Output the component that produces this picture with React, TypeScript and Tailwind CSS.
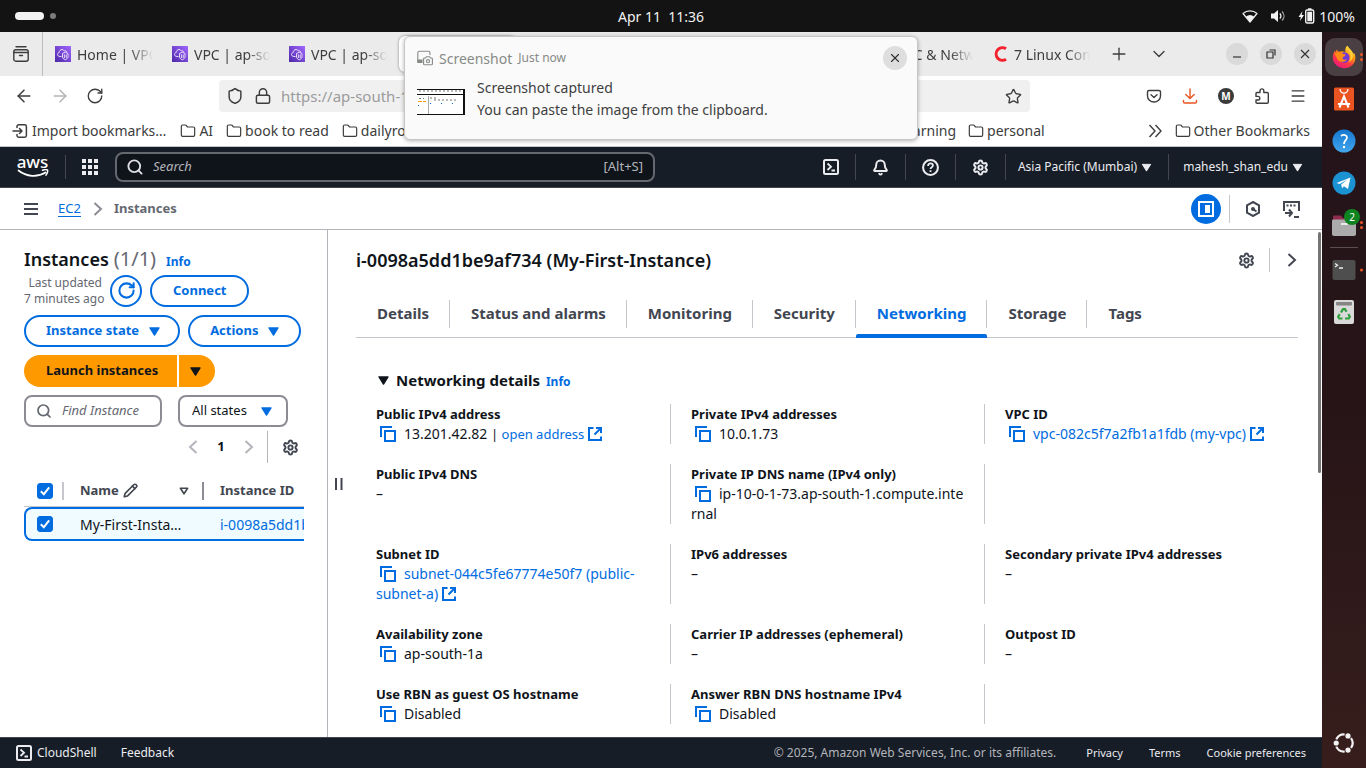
import type { ReactNode } from 'react';
import { Settings, Bell, Search, Shield, Lock, Star, Plus, ChevronDown, X, Menu, Folder, ArrowLeft, ArrowRight, RotateCw, Pencil } from 'lucide-react';

/* ---------- shared glyphs ---------- */

const Caret = ({ className = '' }: { className?: string }) => (
  <svg aria-hidden="true" viewBox="0 0 12 10" className={`h-[9px] w-[11px] shrink-0 ${className}`} fill="currentColor" stroke="currentColor" strokeWidth="1.5" strokeLinejoin="round">
    <path d="M1 1h10L6 9z" />
  </svg>
);

const Chevron = ({ left = false, className = '' }: { left?: boolean; className?: string }) => (
  <svg aria-hidden="true" viewBox="0 0 16 16" className={`size-4 shrink-0 ${className}`} fill="none" stroke="currentColor" strokeWidth="2">
    <path d={left ? 'M11.5 2 5 8l6.5 6' : 'M4.500 2 11 8l-6.500 6'} />
  </svg>
);

const CopyButton = () => (
  <button type="button" aria-label="Copy" className="mr-2 ml-1 inline-block size-4 align-[-3px] text-[#006ce0]">
    <svg aria-hidden="true" viewBox="0 0 16 16" className="size-4" fill="none" stroke="currentColor" strokeWidth="2">
      <path d="M1 11V1h11" />
      <path d="M5 5h10v10H5z" />
    </svg>
  </button>
);

const External = () => (
  <svg aria-hidden="true" viewBox="0 0 14 14" className="ml-1 inline-block size-[14px] align-[-2px]" fill="none" stroke="currentColor" strokeWidth="2">
    <path d="M5.500 1H1v12h12V9.500" />
    <path d="M8 1h5v5M13 1 6.500 7.500" />
  </svg>
);

const ShellIcon = ({ className = '' }: { className?: string }) => (
  <svg aria-hidden="true" viewBox="0 0 16 16" className={className} fill="none" stroke="currentColor" strokeWidth="2">
    <rect x="1" y="1" width="14" height="14" rx="1.500" />
    <path d="m4.500 4.500 3.500 3.200-3.500 3.300M8.500 11.500h3.500" strokeWidth="1.800" />
  </svg>
);

const Link = ({ className = '', children }: { className?: string; children: ReactNode }) => (
  <a href="#" className={`text-[#006ce0] ${className}`}>{children}</a>
);

/* ---------- browser chrome ---------- */

const VpcIcon = () => (
  <svg aria-hidden="true" viewBox="0 0 16 16" className="size-4 shrink-0">
    <defs>
      <linearGradient id="vpc" x1="0" y1="1" x2="1" y2="0">
        <stop offset="0" stopColor="#4d27a8" />
        <stop offset="1" stopColor="#a166ff" />
      </linearGradient>
    </defs>
    <path fill="url(#vpc)" d="M0 0h16v16H0z" />
    <path d="M6.500 10.500H5C3.500 10.500 2.500 9.500 2.500 8.500c0-1 .7-1.800 1.700-1.900C4.200 4.800 5.500 3.500 7 3.500c1 0 1.900.5 2.400 1.400 1-.4 2.300.2 2.400 1.300" fill="none" stroke="#fff" strokeWidth=".8" />
    <path d="M7.500 7.500 10.300 6.200 13 7.500V11c0 1.200-1.300 2.200-2.700 2.800-1.500-.6-2.800-1.600-2.800-2.800zM9.400 8.500v3.500M11.200 8.500v3.500" fill="none" stroke="#fff" strokeWidth=".8" />
  </svg>
);

const BrowserTab = ({ icon, title, active = false }: { icon: ReactNode; title?: string; active?: boolean }) => (
  <div className={`flex h-9 w-[117px] shrink-0 items-center gap-[6px] pl-3 ${active ? 'rounded-md bg-white shadow-[0_0_3px_rgba(0,0,0,0.45)]' : ''}`}>
    {icon}
    {title && <span className="w-[76px] overflow-hidden whitespace-nowrap [mask-image:linear-gradient(to_right,#000_70%,transparent)]">{title}</span>}
  </div>
);

const WinButton = ({ label, children }: { label: string; children: ReactNode }) => (
  <button type="button" aria-label={label} className="grid size-[22px] place-items-center rounded-full bg-[#dadada]">
    <svg aria-hidden="true" viewBox="0 0 12 12" className="size-3" fill="none" stroke="#333" strokeWidth="1.200">{children}</svg>
  </button>
);

const Bookmark = ({ children }: { children: ReactNode }) => (
  <a href="#" className="flex items-center gap-[3px] whitespace-nowrap">
    <Folder aria-hidden="true" className="size-4" strokeWidth={1.8} />
    {children}
  </a>
);

const Browser = () => (
  <div className="shrink-0 text-[14px] text-[#3d3d3d]">
    <div className="flex h-11 items-center overflow-hidden bg-[#ebebeb]">
      <button type="button" aria-label="View open tabs" className="grid h-full w-[42px] shrink-0 place-items-center">
        <svg aria-hidden="true" viewBox="0 0 16 16" className="size-4" fill="none" stroke="currentColor" strokeWidth="1.400" strokeLinecap="round">
          <path d="M3 .8h10" />
          <rect x=".8" y="3.800" width="14.400" height="11.400" rx="2" />
          <path d="M.8 6.500h14.400M6.500 9.500h3" />
        </svg>
      </button>
      <div className="flex h-full min-w-0 flex-1 items-center border-l border-[#bdbdbd]">
        <BrowserTab icon={<VpcIcon />} title="Home | VPC" />
        <BrowserTab icon={<VpcIcon />} title="VPC | ap-so" />
        <BrowserTab icon={<VpcIcon />} title="VPC | ap-so" />
        <div className="ml-[5px]"><BrowserTab active icon={<VpcIcon />} /></div>
        <div className="flex-1" />
        <BrowserTab icon={<VpcIcon />} title="VPC & Netw" />
        <BrowserTab
          icon={<svg aria-hidden="true" viewBox="0 0 16 16" className="size-4 shrink-0" fill="none" stroke="#f5222d" strokeWidth="3"><path d="M14 2.800A6.300 6.300 0 1 0 14 13.200" /></svg>}
          title="7 Linux Con"
        />
        <div className="flex items-center gap-5 pr-[65px] pl-3">
          <button type="button" aria-label="New tab"><Plus className="size-5" strokeWidth={1.6} /></button>
          <button type="button" aria-label="List all tabs"><ChevronDown className="size-5" strokeWidth={1.6} /></button>
        </div>
        <div className="-ml-2 flex shrink-0 items-center gap-3 pr-[6px]">
          <WinButton label="Minimize"><path d="M2 9h8" /></WinButton>
          <WinButton label="Restore"><path d="M2 4h6v6H2zM4.500 2H10v5.500" /></WinButton>
          <WinButton label="Close"><path d="m2 2 8 8M10 2l-8 8" /></WinButton>
        </div>
      </div>
    </div>
    <div className="flex h-10 items-center bg-white pr-4 pl-[14px]">
      <div className="flex w-[205px] shrink-0 items-center gap-4">
        <button type="button" aria-label="Back"><ArrowLeft className="size-5" strokeWidth={1.8} /></button>
        <button type="button" aria-label="Forward" className="text-[#b5b5b5]"><ArrowRight className="size-5" strokeWidth={1.8} /></button>
        <button type="button" aria-label="Reload"><RotateCw className="size-[18px]" strokeWidth={1.8} /></button>
      </div>
      <div className="flex h-8 flex-1 items-center gap-2 rounded bg-[#f0f0f0] px-2">
        <Shield aria-hidden="true" className="size-4 scale-110" strokeWidth={2} />
        <Lock aria-hidden="true" className="ml-1 size-4 scale-110" strokeWidth={2} />
        <input aria-label="Address" readOnly defaultValue="https://ap-south-1" className="ml-[2px] min-w-0 flex-1 bg-transparent text-[15px] text-[#9b9b9b] outline-none" />
        <button type="button" aria-label="Bookmark this page"><Star className="size-[17px]" strokeWidth={1.9} /></button>
      </div>
      <div className="ml-4 flex items-center gap-5 pl-[100px]">
        <button type="button" aria-label="Save to Pocket">
          <svg aria-hidden="true" viewBox="0 0 16 16" className="size-4" fill="none" stroke="currentColor" strokeWidth="1.400" strokeLinecap="round" strokeLinejoin="round">
            <path d="M3 2.500h10c.8 0 1.500.6 1.500 1.500v4a6.500 6 0 0 1-13 0V4c0-.9.700-1.500 1.500-1.500z" />
            <path d="m5 6.800 3 2.700 3-2.700" />
          </svg>
        </button>
        <button type="button" aria-label="Downloads" className="text-[#e95420]">
          <svg aria-hidden="true" viewBox="0 0 16 16" className="size-4" fill="none" stroke="currentColor" strokeWidth="1.400" strokeLinecap="round" strokeLinejoin="round">
            <path d="M8 1v9.500M3.800 6.500 8 10.500l4.200-4M1.500 12.500v1.200c0 .7.600 1.300 1.300 1.300h10.400c.7 0 1.300-.6 1.300-1.300v-1.200" />
          </svg>
        </button>
        <button type="button" aria-label="Account" className="grid size-4 place-items-center rounded-full bg-[#3a3a3a] text-[10px] leading-none font-bold text-white">M</button>
        <button type="button" aria-label="Extensions">
          <svg aria-hidden="true" viewBox="0 0 16 16" className="size-4" fill="none" stroke="currentColor" strokeWidth="1.400" strokeLinejoin="round">
            <path d="M6 4.500V2.800a1.900 1.900 0 0 1 3.800 0v1.700h3.400c.7 0 1.100.4 1.100 1.100v8.600c0 .7-.4 1.100-1.100 1.100H3.100c-.7 0-1.100-.4-1.100-1.100V12h2a1.800 1.800 0 0 0 0-3.600H2V5.600c0-.7.4-1.100 1.100-1.100z" />
          </svg>
        </button>
        <button type="button" aria-label="Menu"><Menu className="size-4 scale-110" strokeWidth={1.8} /></button>
      </div>
    </div>
    <div className="flex h-[31px] items-center border-b border-[#c4c8ca] bg-white pr-3 pb-[1px] pl-3">
      <div className="flex items-center gap-[13px]">
        <a href="#" className="mr-[1px] flex items-center gap-1 whitespace-nowrap">
          <svg aria-hidden="true" viewBox="0 0 16 16" className="size-4" fill="none" stroke="currentColor" strokeWidth="1.500" strokeLinecap="round" strokeLinejoin="round">
            <path d="M5 4.500V3.500c0-1 .7-1.700 1.700-1.700h6c1 0 1.700.7 1.700 1.700v9c0 1-.7 1.700-1.700 1.700h-6c-1 0-1.700-.7-1.700-1.700v-1M1 8h9M7.500 5.500 10 8l-2.500 2.500" />
          </svg>
          Import bookmarks…
        </a>
        <Bookmark>AI</Bookmark>
        <Bookmark>book to read</Bookmark>
        <Bookmark>dailyro</Bookmark>
      </div>
      <div className="ml-auto flex items-center gap-3">
        <Bookmark>learning</Bookmark>
        <Bookmark>personal</Bookmark>
      </div>
      <button type="button" aria-label="More bookmarks" className="mr-3 ml-[102px]">
        <svg aria-hidden="true" viewBox="0 0 16 16" className="size-4" fill="none" stroke="currentColor" strokeWidth="1.400"><path d="m2.500 2 5.500 6-5.500 6M8.500 2 14 8l-5.500 6" /></svg>
      </button>
      <Bookmark>Other Bookmarks</Bookmark>
    </div>
  </div>
);

const Notification = () => (
  <section aria-label="Notification" className="absolute top-1 left-1/2 z-10 h-[104px] w-[514px] -translate-x-1/2 rounded-md border border-[#c6c6c6] bg-[#fafafa] pr-[10px] pl-3 text-[14px] text-[#3f3f3f] shadow-[0_1px_4px_rgba(0,0,0,0.3)]">
    <div className="flex h-10 items-center pt-[2px] text-[#868a86]">
      <svg aria-hidden="true" viewBox="0 0 16 16" className="mr-[6px] size-4" fill="none" stroke="currentColor" strokeWidth="1.100">
        <path d="M5 12.500H2C1.200 12.500.8 12 .8 11.500V3c0-1 .5-1.700 1.500-1.700h9c1 0 1.700.7 1.700 1.700v2" />
        <path d="M1 10h4v2.500H1z" fill="currentColor" />
        <path d="M7.500 8h1l1-1.300h3L13.500 8h1c.5 0 .9.400.9.900v5c0 .5-.4.900-.9.900h-7c-.5 0-.9-.4-.9-.9v-5c0-.5.400-.9.900-.9z" />
        <circle cx="11" cy="11.200" r="1.600" />
      </svg>
      <span>Screenshot</span>
      <span className="ml-[6px] text-[12px]">Just now</span>
      <button type="button" aria-label="Close notification" className="ml-auto grid size-6 place-items-center rounded-full bg-[#dedede] text-[#333]"><X className="size-[14px]" strokeWidth={2} /></button>
    </div>
    <div className="flex items-start gap-3">
      <svg aria-hidden="true" viewBox="0 0 48 26" className="mt-3 h-[26px] w-12 shrink-0">
        <path fill="#fff" d="M0 0h48v26H0z" />
        <path fill="#111" d="M0 0h48v1H0zM0 5h48v1H0zM0 25h48v1H0zM46 0h2v26h-2z" />
        <path stroke="#777" strokeDasharray="2 2" d="M2 2h43M2 9.500h5M13 9h8M17 11h24" />
        <path stroke="#aaa" d="M11.500 7v18" />
        <path stroke="#f90" strokeDasharray="4 1" d="M1 12.500h8" />
        <path stroke="#006ce0" strokeDasharray="1 10" d="M13 14.500h25M1 16.500h3" />
      </svg>
      <div className="leading-[22px]">
        <p>Screenshot captured</p>
        <p>You can paste the image from the clipboard.</p>
      </div>
    </div>
  </section>
);

/* ---------- AWS console ---------- */

const Divider = ({ className = '' }: { className?: string }) => <span className={`w-px shrink-0 ${className}`} />;

const ConsoleHeader = () => (
  <header className="flex h-[41px] shrink-0 items-center border-b border-[#424650] bg-[#161d26] pr-[19px] pl-4 text-[12px] text-[#ebebf0]">
    <a href="#" aria-label="AWS home" className="flex w-[33px] flex-col items-center">
      <span className="h-[13px] text-[17px] leading-[11px] font-medium text-white">aws</span>
      <svg aria-hidden="true" viewBox="0 0 32 9" className="h-[9px] w-8" fill="none" stroke="#fff" strokeWidth="1.700" strokeLinecap="round">
        <path d="M1.500 1.500c8 6.500 19 7 27 2" />
        <path d="M25.500 1.200c2-.6 4.500-.6 5-.1s0 3-1.500 5" strokeWidth="1.500" />
      </svg>
    </a>
    <Divider className="mr-4 ml-4 h-6 bg-[#424650]" />
    <button type="button" aria-label="Services">
      <svg aria-hidden="true" viewBox="0 0 16 16" className="size-4" fill="currentColor">
        <path d="M0 0h4v4H0zM6 0h4v4H6zM12 0h4v4h-4zM0 6h4v4H0zM6 6h4v4H6zM12 6h4v4h-4zM0 12h4v4H0zM6 12h4v4H6zM12 12h4v4h-4z" />
      </svg>
    </button>
    <label className="mr-4 ml-[17px] flex h-[30px] max-w-[540px] flex-1 items-center gap-[10px] rounded-lg border-2 border-[#656871] bg-[#0f141a] px-[10px] text-[#b4b4bb]">
      <Search aria-hidden="true" className="size-4 scale-110 text-[#dedee3]" strokeWidth={2.6} />
      <input aria-label="Search" placeholder="Search" className="min-w-0 flex-1 bg-transparent text-[13px] italic outline-none placeholder:text-[#b4b4bb]" />
      <span className="text-[13px]">[Alt+S]</span>
    </label>
    <div className="ml-auto flex items-center">
      <button type="button" aria-label="CloudShell"><ShellIcon className="size-4" /></button>
      <Divider className="mx-4 h-[26px] bg-[#424650]" />
      <button type="button" aria-label="Notifications"><Bell className="size-[17px]" strokeWidth={2.8} /></button>
      <Divider className="mx-4 h-[26px] bg-[#424650]" />
      <button type="button" aria-label="Help">
        <svg aria-hidden="true" viewBox="0 0 16 16" className="size-[17px]" fill="none" stroke="currentColor" strokeWidth="1.900">
          <circle cx="8" cy="8" r="7" />
          <path d="M5.700 6.500C5.700 5 6.700 4.200 8 4.200s2.300.8 2.300 2c0 1.600-2.300 1.500-2.300 3.100M8 10.600v1.700" strokeWidth="1.700" />
        </svg>
      </button>
      <Divider className="mx-4 h-[26px] bg-[#424650]" />
      <button type="button" aria-label="Settings"><Settings className="size-[17px]" strokeWidth={2.8} /></button>
      <Divider className="mr-3 ml-4 h-[26px] bg-[#424650]" />
      <button type="button" className="flex items-center gap-1 whitespace-nowrap">Asia Pacific (Mumbai) <Caret className="scale-90" /></button>
      <Divider className="mr-[14px] ml-4 h-[26px] bg-[#424650]" />
      <button type="button" className="flex items-center gap-1 whitespace-nowrap">mahesh_shan_edu <Caret className="scale-90" /></button>
    </div>
  </header>
);

const Breadcrumbs = () => (
  <nav aria-label="Breadcrumbs" className="flex h-[42px] shrink-0 items-center border-b border-[#b4b4bb] bg-white pr-[22px] pl-6 text-[13px] text-[#424650]">
    <button type="button" aria-label="Open navigation" className="mr-5">
      <svg aria-hidden="true" viewBox="0 0 14 12" className="h-3 w-[14px]" stroke="currentColor" strokeWidth="2"><path d="M0 1h14M0 6h14M0 11h14" /></svg>
    </button>
    <a href="#" className="border-b border-[#006ce0] leading-4 text-[#006ce0]">EC2</a>
    <Chevron className="mr-2 ml-[9px] text-[#8c8c94]" />
    <span className="font-bold text-[#656871]">Instances</span>
    <div className="ml-auto flex items-center">
      <button type="button" aria-label="Split panel" className="grid size-[30px] place-items-center rounded-full bg-[#006ce0] text-white">
        <svg aria-hidden="true" viewBox="0 0 16 16" className="size-4" fill="none" stroke="currentColor" strokeWidth="2"><path d="M1 1h14v14H1z" /><path d="M7 4h5v8H7z" fill="currentColor" stroke="none" /></svg>
      </button>
      <Divider className="mr-[15px] ml-2 h-7 bg-[#c6c6cd]" />
      <button type="button" aria-label="Resource usage">
        <svg aria-hidden="true" viewBox="0 0 16 16" className="size-4" fill="none" stroke="currentColor" strokeWidth="2"><path d="M8 1 14 4.300v7.400L8 15l-6-3.300V4.300z" /><path d="m8 8 3.500 2.500" /><circle cx="8" cy="8" r="1" fill="currentColor" /></svg>
      </button>
      <button type="button" aria-label="Open shell" className="ml-[21px]">
        <svg aria-hidden="true" viewBox="0 0 18 18" className="size-[18px]" fill="none" stroke="currentColor" strokeWidth="2"><path d="M2 11V2h15v9" /><path d="M4.500 5.500h10" strokeDasharray="2 1.500" /><path d="M3 13h6M7 9.500l3 3.500-3 3.500M12 17h5" /></svg>
      </button>
    </div>
  </nav>
);

const pill = 'flex h-8 items-center rounded-full border-2 border-[#006ce0] text-[13px] font-bold text-[#006ce0]';

const Tick = ({ label }: { label: string }) => (
  <span className="relative block size-4">
    <input type="checkbox" defaultChecked aria-label={label} className="block size-4 appearance-none rounded-[3px] border border-[#8c8c94] checked:border-[#006ce0] checked:bg-[#006ce0]" />
    <svg aria-hidden="true" viewBox="0 0 16 16" className="pointer-events-none absolute inset-0 size-4" fill="none" stroke="#fff" strokeWidth="2"><path d="m3.800 8.300 3 2.900 5.400-6.900" /></svg>
  </span>
);

const InstanceList = () => (
  <aside className="w-[328px] shrink-0 overflow-hidden border-r border-[#b4b4bb] bg-white pr-[23px] pl-6 text-[#424650]">
    <h1 className="mt-[15px] mb-[1px] flex h-7 items-baseline text-[18px] leading-7 font-semibold text-[#0f141a]">
      <span>Instances</span>
      <span className="ml-[5px] text-[20px] font-normal text-[#656871]">(1/1)</span>
      <a href="#" className="ml-[10px] text-[12px] font-bold text-[#006ce0]">Info</a>
    </h1>
    <div className="flex flex-wrap gap-2">
      <div className="flex w-full items-center gap-2">
        <p className="w-[78px] pt-[1px] text-right text-[12px] leading-4 whitespace-nowrap text-[#656871]">Last updated<br />7 minutes ago</p>
        <button type="button" aria-label="Refresh" className={`${pill} w-8 justify-center`}><RotateCw className="size-[19px]" strokeWidth={2.6} /></button>
        <button type="button" className={`${pill} px-[21px]`}>Connect</button>
      </div>
      <button type="button" className={`${pill} gap-[10px] pr-[18px] pl-5`}>Instance state <Caret /></button>
      <button type="button" className={`${pill} gap-[10px] px-5`}>Actions <Caret /></button>
      <div className="flex w-full gap-[2px]">
        <button type="button" className="h-8 rounded-l-full bg-[#ff9900] pr-[19px] pl-[22px] text-[13px] font-bold text-[#0f141a]">Launch instances</button>
        <button type="button" aria-label="More launch options" className="grid h-8 w-9 place-items-center rounded-r-full bg-[#ff9900] pr-1 text-[#0f141a]"><Caret /></button>
      </div>
      <div className="flex w-full gap-4">
        <label className="flex h-8 w-[138px] items-center gap-[10px] rounded-lg border-2 border-[#8c8c94] pr-3 pl-[10px]">
          <Search aria-hidden="true" className="size-4 shrink-0 text-[#656871]" strokeWidth={2.6} />
          <input aria-label="Find Instance" placeholder="Find Instance" className="w-full min-w-0 text-[13px] italic outline-none placeholder:text-[#656871]" />
        </label>
        <div className="flex h-8 w-[110px] items-center rounded-lg border-2 border-[#8c8c94] pr-[14px] pl-3 text-[#0f141a]">
          <select aria-label="State filter" className="min-w-0 flex-1 appearance-none bg-transparent text-[13px] outline-none"><option>All states</option></select>
          <Caret className="text-[#006ce0]" />
        </div>
      </div>
    </div>
    <div className="mt-1 flex h-8 items-center justify-end pr-[5px]">
      <button type="button" aria-label="Previous page" className="text-[#b4b4bb]"><Chevron left /></button>
      <button type="button" className="w-10 text-[13px] font-bold text-[#0f141a]">1</button>
      <button type="button" aria-label="Next page" className="text-[#b4b4bb]"><Chevron /></button>
      <Divider className="mr-[14px] ml-[10px] h-full bg-[#b4b4bb]" />
      <button type="button" aria-label="Table preferences"><Settings className="size-[17px]" strokeWidth={2.7} /></button>
    </div>
    <div className="mt-3 overflow-hidden">
      <table className="w-[420px] table-fixed border-separate border-spacing-0 text-left">
        <thead>
          <tr className="h-8 text-[13px]">
            <th className="w-10 border-b border-[#c6c6cd] p-0"><span className="flex h-[18px] w-full items-center border-r-2 border-[#c6c6cd] pl-[13px]"><Tick label="Select all" /></span></th>
            <th className="w-[140px] border-b border-[#c6c6cd] p-0">
              <span className="flex h-[18px] w-full items-center gap-1 border-r-2 border-[#8c8c94] pr-[13px] pl-4">Name <Pencil aria-hidden="true" className="size-[15px]" strokeWidth={2.6} />
                <svg aria-hidden="true" viewBox="0 0 12 10" className="ml-auto h-2 w-[10px]" fill="none" stroke="currentColor" strokeWidth="2" strokeLinejoin="round"><path d="M1.500 1.500h9L6 8.500z" /></svg>
              </span>
            </th>
            <th className="border-b border-[#c6c6cd] p-0 pl-4">Instance ID</th>
          </tr>
        </thead>
        <tbody>
          <tr className="h-[34px] bg-[#f0fbff] text-[14px] text-[#0f141a]">
            <td className="rounded-l-lg border-2 border-r-0 border-[#006ce0] p-0 pl-[11px]"><Tick label="Select My-First-Instance" /></td>
            <td className="border-y-2 border-[#006ce0] p-0 pl-4"><span className="block w-[104px] truncate">My-First-Instance</span></td>
            <td className="border-y-2 border-[#006ce0] p-0 pl-4"><Link>i-0098a5dd1be9af734</Link></td>
          </tr>
        </tbody>
      </table>
    </div>
  </aside>
);

const TABS = ['Details', 'Status and alarms', 'Monitoring', 'Security', 'Networking', 'Storage', 'Tags'];

const FIELDS: { label?: string; value?: ReactNode; breakAll?: boolean }[] = [
  { label: 'Public IPv4 address', value: <><CopyButton />13.201.42.82 <span className="text-[13px]">| <Link>open address<External /></Link></span></> },
  { label: 'Private IPv4 addresses', value: <><CopyButton />10.0.1.73</> },
  { label: 'VPC ID', value: <><CopyButton /><Link>vpc-082c5f7a2fb1a1fdb (my-vpc)<External /></Link></> },
  { label: 'Public IPv4 DNS', value: '–' },
  { label: 'Private IP DNS name (IPv4 only)', value: <><CopyButton />ip-10-0-1-73.ap-south-1.compute.internal</>, breakAll: true },
  {},
  { label: 'Subnet ID', value: <><CopyButton /><Link>subnet-044c5fe67774e50f7 (public-subnet-a)<External /></Link></> },
  { label: 'IPv6 addresses', value: '–' },
  { label: 'Secondary private IPv4 addresses', value: '–' },
  { label: 'Availability zone', value: <><CopyButton />ap-south-1a</> },
  { label: 'Carrier IP addresses (ephemeral)', value: '–' },
  { label: 'Outpost ID', value: '–' },
  { label: 'Use RBN as guest OS hostname', value: <><CopyButton />Disabled</> },
  { label: 'Answer RBN DNS hostname IPv4', value: <><CopyButton />Disabled</> },
  {},
];

const DetailPanel = () => (
  <main className="flex min-w-0 flex-1 bg-white text-[#0f141a]">
    <button type="button" aria-label="Resize panel" className="flex w-[22px] shrink-0 items-center justify-center">
      <svg aria-hidden="true" viewBox="0 0 8 12" className="h-3 w-2" stroke="#424650" strokeWidth="2"><path d="M1 0v12M6.500 0v12" /></svg>
    </button>
    <div className="min-w-0 flex-1 overflow-hidden pr-5 pl-[6px]">
      <div className="flex h-[60px] items-center">
        <h2 className="text-[18px] font-semibold">i-0098a5dd1be9af734 (My-First-Instance)</h2>
        <div className="-mr-0.5 ml-auto flex items-center text-[#424650]">
          <button type="button" aria-label="Panel preferences"><Settings className="size-[17px]" strokeWidth={2.7} /></button>
          <Divider className="mx-[14px] h-6 bg-[#c6c6cd]" />
          <button type="button" aria-label="Close panel"><Chevron /></button>
        </div>
      </div>
      <div role="tablist" className="flex h-12 border-b border-[#c6c6cd] text-[15px] font-bold text-[#424650]">
        {TABS.map((tab, i) => {
          const active = tab === 'Networking';
          return (
            <button key={tab} type="button" role="tab" aria-selected={active} className={`relative flex items-center whitespace-nowrap ${active ? 'text-[#006ce0]' : ''}`}>
              <span className={`flex h-7 items-center pr-5 pl-[21px] ${i < TABS.length - 1 ? 'border-r border-[#c6c6cd]' : ''}`}>{tab}</span>
              {active && <span className="absolute right-0 -bottom-px left-0 h-1 rounded-t-xs bg-[#006ce0]" />}
            </button>
          );
        })}
      </div>
      <h3 className="mt-[30px] flex h-6 items-center pl-[22px] text-[15px] font-bold">
        <Caret className="mr-[7px]" />
        Networking details
        <a href="#" className="ml-[6px] pt-1 text-[12px] text-[#006ce0]">Info</a>
      </h3>
      <div className="mt-3 grid grid-cols-3 gap-y-5 pb-5 text-[14px] leading-5">
        {FIELDS.map((field, i) => (
          <div key={i} className={`px-5 ${i % 3 ? 'border-l border-[#c6c6cd]' : ''}`}>
            {field.label && <h4 className="text-[13px] leading-5 font-bold">{field.label}</h4>}
            <div className={field.breakAll ? 'break-all' : 'break-words'}>{field.value}</div>
          </div>
        ))}
      </div>
    </div>
    <div className="w-1 shrink-0 pt-[2px]"><div className="h-[241px] w-[3px] rounded-full bg-[#757575]" /></div>
  </main>
);

const Footer = () => (
  <footer className="flex h-[31px] shrink-0 items-center border-t border-[#424650] bg-[#161d26] px-4 text-[12px] whitespace-nowrap text-[#ebebf0]">
    <button type="button" className="flex items-center gap-[5px]"><ShellIcon className="size-4" />CloudShell</button>
    <button type="button" className="ml-6">Feedback</button>
    <span className="ml-auto text-[#b4b4bb]">© 2025, Amazon Web Services, Inc. or its affiliates.</span>
    <div className="ml-[30px] flex gap-[26px] text-[11px]">
      <a href="#">Privacy</a>
      <a href="#">Terms</a>
      <a href="#">Cookie preferences</a>
    </div>
  </footer>
);

/* ---------- desktop ---------- */

const TopBar = () => (
  <div className="flex h-8 shrink-0 items-center bg-[#131313] pr-[11px] pl-[15px] text-[14px] text-[#f2f2f2]">
    <div className="flex flex-1 items-center gap-[6px]">
      <span className="h-2 w-[29px] rounded-full bg-[#f2f2f2]" />
      <span className="size-[6px] rounded-full bg-[#7d7d7d]" />
    </div>
    <time className="mr-12 whitespace-pre">Apr 11  11:36</time>
    <div className="flex flex-1 items-center justify-end">
      <svg aria-hidden="true" viewBox="0 0 16 16" className="size-4"><path d="M1 5.500C5 2 11 2 15 5.500L8 14z" fill="none" stroke="#f2f2f2" strokeWidth="1.200" strokeLinejoin="round" /><path d="M4 8.500c2.500-2 5.500-2 8 0L8 14z" fill="#f2f2f2" /></svg>
      <svg aria-hidden="true" viewBox="0 0 16 16" className="ml-3 size-4"><path d="M1 5.500h3L8 2v12l-4-3.500H1z" fill="#f2f2f2" /><path d="M9.800 5.500c1.500 1.500 1.500 3.500 0 5" fill="none" stroke="#f2f2f2" strokeWidth="1.400" /><path d="M12 3.500c2.700 2.700 2.700 6.300 0 9" fill="none" stroke="#a5a5a5" strokeWidth="1.200" /></svg>
      <svg aria-hidden="true" viewBox="0 0 17 16" className="mr-1 ml-3 h-4 w-[17px]" fill="#f2f2f2"><path d="M4.500 3 .5 9h2.300L2 13l4-6H3.700z" /><rect x="7.700" y="2" width="8" height="13" rx="1.500" fill="none" stroke="#f2f2f2" strokeWidth="1.400" /><path d="M10 .3h3.500V2H10zM9.300 3.700h4.800v9.600H9.300z" /></svg>
      <span>100%</span>
    </div>
  </div>
);

const DockItem = ({ label, dots = 0, active = false, badge, children }: { label: string; dots?: number; active?: boolean; badge?: string; children: ReactNode }) => (
  <button type="button" aria-label={label} className="relative grid h-[42px] w-full place-items-center">
    <span className={`grid size-[38px] place-items-center rounded-[10px] ${active ? 'bg-[#4a3f43]' : ''}`}>
      <svg aria-hidden="true" viewBox="0 0 24 24" className="size-6">{children}</svg>
    </span>
    {badge && <span className="absolute top-[5px] right-[6px] grid size-4 place-items-center rounded-full bg-[#0e8420] text-[10px] leading-none text-white">{badge}</span>}
    {dots > 0 && (
      <span className="absolute top-1/2 right-[3px] grid -translate-y-1/2 gap-[2px]">
        {Array.from({ length: dots }, (_, i) => <i key={i} className="size-[3px] rounded-full bg-[#e95420]" />)}
      </span>
    )}
  </button>
);

const Dock = () => (
  <nav aria-label="Dock" className="flex w-11 shrink-0 flex-col bg-gradient-to-b from-[#24151b] via-[#261417] to-[#371e1c] pt-1">
    <DockItem label="Firefox" dots={2} active>
      <defs>
        <linearGradient id="fox" x1=".8" y1="0" x2=".2" y2="1"><stop offset="0" stopColor="#fff44f" /><stop offset=".35" stopColor="#ff980e" /><stop offset=".65" stopColor="#ff3647" /><stop offset="1" stopColor="#e31587" /></linearGradient>
      </defs>
      <path d="M15 .8c2 1.500 2.500 3 3.500 3.700C20 6 20.300 7 20.300 7c1 .5 1.400 2 1.400 2l.8-.8c1 3 1.200 5.500.3 8-1.500 4-5.500 7-10.300 7C6 23.200.8 18.500.8 12.500c0-3 .9-5.200 2.200-7l.6 1.800 1-2.800c.5 1 1.500 2 3 2.200 2.500-.7 4.500-.2 6 .8-.8-2.500-.3-4.800 1.400-6.700z" fill="url(#fox)" />
      <circle cx="12.300" cy="12.500" r="5.200" fill="#7139d8" />
      <path d="M2.500 8.500c3-2 6-2 8 0 1.300.8 2.800.6 3 1.200.2 1.300-2 1.800-2.800 2.700-.5 2 2 3 4.300 1.800-2 3.800-8.500 3.500-10-.7C4.200 11.500 3 10 2.500 8.500z" fill="#ff8b16" />
      <path d="M16 4c3 3.500 3.500 9 .8 13.500 6-4 5-11-.8-13.500z" fill="#ffd43a" />
    </DockItem>
    <DockItem label="App Center">
      <rect x="2" y=".5" width="20" height="23" rx="1.500" fill="#e95420" />
      <path d="M8 2c.5 5.500 7.500 5.500 8 0" fill="none" stroke="#fff" strokeWidth="1.200" />
      <path d="M7.500 20.500 12 9.500l4.500 11M6 17h12" fill="none" stroke="#fff" strokeWidth="2" />
    </DockItem>
    <DockItem label="Help">
      <defs><linearGradient id="help" x1="0" y1="0" x2="0" y2="1"><stop offset="0" stopColor="#1577d0" /><stop offset="1" stopColor="#42a5ec" /></linearGradient></defs>
      <circle cx="12" cy="12" r="11.500" fill="url(#help)" />
      <path d="M9 7c2.500-2 6-1 6 1.500S12 11.500 12 15" fill="none" stroke="#fff" strokeWidth="1.700" />
      <circle cx="12" cy="18" r="1.200" fill="#fff" />
    </DockItem>
    <DockItem label="Telegram">
      <circle cx="12" cy="12" r="11.500" fill="#1b92d1" />
      <path d="M4.500 12 18.500 6.500 16 18l-4-2.800-2 2-.8-3.800 6-5-7.500 4.500z" fill="#fff" />
    </DockItem>
    <DockItem label="Files" dots={2} badge="2">
      <path d="M1 4c0-1 .5-1.500 1.500-1.500H9L11 5h9c1 0 1.500.5 1.500 1.500V10H1z" fill="#8e2c50" />
      <path d="M0 8c0-1 .5-1.500 1.500-1.500h21c1 0 1.500.5 1.500 1.500v13c0 1.200-.8 2-2 2H2c-1.200 0-2-.8-2-2z" fill="#ababab" />
      <path d="M9 11h7" stroke="#fff" strokeWidth="1.500" />
    </DockItem>
    <div className="mx-2 my-[1px] h-px shrink-0 bg-[#5a5053]" />
    <DockItem label="Terminal" dots={1}>
      <rect x=".5" y="2" width="23" height="20" rx="2" fill="#4e4e4e" />
      <path d="m3 5.500 2.500 1.800L3 9M7 10h4" fill="none" stroke="#eee" strokeWidth="1.300" />
    </DockItem>
    <DockItem label="Trash">
      <rect x="2" y="0" width="20" height="24" rx="2" fill="#d9d9d9" />
      <rect x="4" y="2" width="16" height="3.500" rx="1" fill="#858585" />
      <path d="m9 12.500 2-3.300h2l1.500 2.500M16.300 14l1.500 2.700-1 1.800H13M10.500 18.500H7.200l-1-1.800 1.500-2.600" fill="none" stroke="#2f9e3b" strokeWidth="2.200" />
    </DockItem>
    <div className="mt-auto pb-1">
      <DockItem label="Show apps">
        <path d="M4.300 8.400A8.500 8.500 0 0 1 12.700 3.500M19 7.100a8.500 8.500 0 0 1 0 9.800M12.700 20.500a8.500 8.500 0 0 1-8.400-4.900" fill="none" stroke="#f2f2f2" strokeWidth="2.200" />
        <circle cx="4.200" cy="12" r="2.600" fill="#f2f2f2" /><circle cx="16" cy="4.900" r="2.600" fill="#f2f2f2" /><circle cx="16" cy="19.100" r="2.600" fill="#f2f2f2" />
      </DockItem>
    </div>
  </nav>
);

export default function App() {
  return (
    <div className="flex h-screen flex-col overflow-hidden font-['Noto_Sans',sans-serif]">
      <TopBar />
      <div className="flex min-h-0 flex-1">
        <div className="relative flex min-w-0 flex-1 flex-col">
          <Browser />
          <Notification />
          <ConsoleHeader />
          <Breadcrumbs />
          <div className="flex min-h-0 flex-1">
            <InstanceList />
            <DetailPanel />
          </div>
          <Footer />
        </div>
        <Dock />
      </div>
    </div>
  );
}
